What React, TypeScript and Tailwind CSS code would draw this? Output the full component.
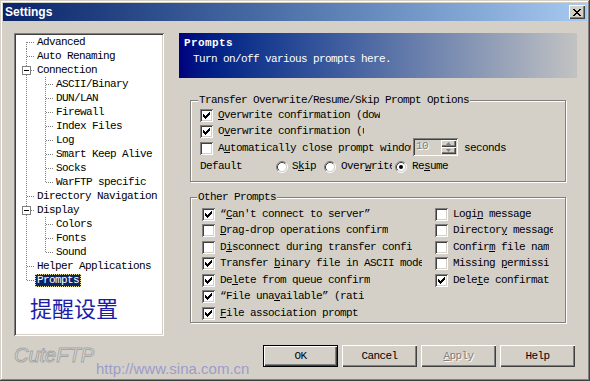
import React from "react";

const mono = "font-['Liberation_Mono','Courier_New',monospace] text-[11px] tracking-[-0.6px] leading-[13px]";
const raised = "shadow-[inset_1px_1px_#ffffff,inset_-1px_-1px_#404040,inset_-2px_-2px_#808080]";
const sunken = "shadow-[inset_1px_1px_#808080,inset_-1px_-1px_#ffffff,inset_2px_2px_#404040,inset_-2px_-2px_#d4d0c8]";
const etched = "border border-[#808080] shadow-[inset_1px_1px_#ffffff,1px_1px_#ffffff]";

const CHECK = ["......x", ".....xx", "x...xxx", "xx.xxx.", "xxxxx..", ".xxx...", "..x...."];
const CROSS = ["xx....xx", ".xx..xx.", "..xxxx..", "...xx...", "..xxxx..", ".xx..xx.", "xx....xx"];

function Pixels({ rows, color }: { rows: string[]; color: string }) {
  return (
    <svg width={rows[0].length} height={rows.length} shapeRendering="crispEdges" className="shrink-0">
      {rows.flatMap((r, y) =>
        r.split("").map((c, x) => (c === "x" ? <rect key={`${x}-${y}`} x={x} y={y} width="1" height="1" fill={color} /> : null))
      )}
    </svg>
  );
}

// label with one underlined access key
function Key({ text, u }: { text: string; u?: number }) {
  if (u === undefined) return <>{text}</>;
  return (
    <>
      {text.slice(0, u)}
      <span className="underline underline-offset-[1px]">{text[u]}</span>
      {text.slice(u + 1)}
    </>
  );
}

function Box({ on }: { on?: boolean }) {
  return (
    <div className={`w-[13px] h-[13px] shrink-0 bg-white ${sunken} flex items-center justify-center`}>
      {on && <Pixels rows={CHECK} color="#000" />}
    </div>
  );
}

function Radio({ on }: { on?: boolean }) {
  return (
    <svg width="12" height="12" viewBox="0 0 12 12" className="shrink-0">
      <circle cx="6" cy="6" r="4.5" fill="#fff" />
      <path d="M2.11 9.89 A5.5 5.5 0 0 1 9.89 2.11" fill="none" stroke="#808080" />
      <path d="M9.89 2.11 A5.5 5.5 0 0 1 2.11 9.89" fill="none" stroke="#ffffff" />
      <path d="M2.82 9.18 A4.5 4.5 0 0 1 9.18 2.82" fill="none" stroke="#404040" />
      <path d="M9.18 2.82 A4.5 4.5 0 0 1 2.82 9.18" fill="none" stroke="#d4d0c8" />
      {on && <circle cx="6" cy="6" r="2" fill="#000" />}
    </svg>
  );
}

type Node = { t: string; l: 1 | 2; box?: boolean; last?: boolean; sel?: boolean };

const tree: Node[] = [
  { t: "Advanced", l: 1 },
  { t: "Auto Renaming", l: 1 },
  { t: "Connection", l: 1, box: true },
  { t: "ASCII/Binary", l: 2 },
  { t: "DUN/LAN", l: 2 },
  { t: "Firewall", l: 2 },
  { t: "Index Files", l: 2 },
  { t: "Log", l: 2 },
  { t: "Smart Keep Alive", l: 2 },
  { t: "Socks", l: 2 },
  { t: "WarFTP specific", l: 2, last: true },
  { t: "Directory Navigation", l: 1 },
  { t: "Display", l: 1, box: true },
  { t: "Colors", l: 2 },
  { t: "Fonts", l: 2 },
  { t: "Sound", l: 2, last: true },
  { t: "Helper Applications", l: 1 },
  { t: "Prompts", l: 1, last: true, sel: true },
];

function Gutter({ v, h, box }: { v: "full" | "top" | "bottom"; h?: boolean; box?: boolean }) {
  return (
    <svg width="19" height="14" shapeRendering="crispEdges" className="shrink-0">
      <line x1="10.5" x2="10.5" y1={v === "bottom" ? 7 : 0} y2={v === "top" ? 8 : 14} stroke="#808080" strokeDasharray="1 1" />
      {h && <line x1={box ? 15 : 11} x2="19" y1="7.5" y2="7.5" stroke="#808080" strokeDasharray="1 1" />}
      {box && (
        <>
          <rect x="6.5" y="3.5" width="8" height="8" fill="#fff" stroke="#808080" />
          <line x1="8" x2="13" y1="7.5" y2="7.5" stroke="#000" />
        </>
      )}
    </svg>
  );
}

function TreeRow({ n, i }: { n: Node; i: number }) {
  const rootV = i === 0 ? "bottom" : n.l === 1 && n.last ? "top" : "full";
  return (
    <div className="h-[14px] flex items-center shrink-0">
      {n.l === 1 ? (
        <Gutter v={rootV} h box={n.box} />
      ) : (
        <>
          <Gutter v="full" />
          <Gutter v={n.last ? "top" : "full"} h />
        </>
      )}
      <span
        className={`px-[2px] h-[13px] whitespace-nowrap ${mono} ${
          n.sel ? "bg-[#0a246a] text-white outline outline-1 outline-dotted outline-[#e8e0a0] -outline-offset-1" : "text-black"
        }`}
      >
        {n.t}
      </span>
    </div>
  );
}

function Spinner() {
  return (
    <div className={`w-[45px] h-[18px] mb-[4px] ml-[2px] p-[2px] flex bg-[#d4d0c8] ${sunken}`}>
      <span className={`flex-1 pl-[1px] text-[#808080] [text-shadow:1px_1px_#ffffff] ${mono}`}>10</span>
      <div className="w-[15px] flex flex-col">
        <div className={`flex-1 flex items-center justify-center ${raised}`}>
          <svg width="5" height="3"><path d="M2.5 0 L5 3 L0 3 Z" fill="#808080" /></svg>
        </div>
        <div className={`flex-1 flex items-center justify-center ${raised}`}>
          <svg width="5" height="3"><path d="M0 0 L5 0 L2.5 3 Z" fill="#808080" /></svg>
        </div>
      </div>
    </div>
  );
}

type Opt = { on?: boolean; t: string; u?: number; w?: string };

const col1: Opt[] = [
  { on: true, t: "\u201cCan't connect to server\u201d", u: 1 },
  { t: "Drag-drop operations confirm", u: 0 },
  { t: "Disconnect during transfer confi", u: 1 },
  { on: true, t: "Transfer binary file in ASCII mode", u: 9, w: "w-[202px]" },
  { on: true, t: "Delete from queue confirm", u: 2 },
  { on: true, t: "\u201cFile unavailable\u201d (rati", u: 9 },
  { on: true, t: "File association prompt", u: 0 },
];

const col2: Opt[] = [
  { t: "Login message", u: 4 },
  { t: "Directory message", u: 8, w: "w-[100px]" },
  { t: "Confirm file nam", u: 6 },
  { t: "Missing permissi", u: 8 },
  { on: true, t: "Delete confirmat", u: 4 },
];

function CheckItem({ o }: { o: Opt }) {
  return (
    <div className="flex items-center">
      <Box on={o.on} />
      <span className={`ml-[5px] overflow-hidden whitespace-nowrap ${o.w ?? ""} ${mono}`}>
        <Key text={o.t} u={o.u} />
      </span>
    </div>
  );
}

function Btn({ label, u, def, off }: { label: string; u?: number; def?: boolean; off?: boolean }) {
  return (
    <div className={`w-[75px] h-[22px] flex ${def ? "border border-black" : ""}`}>
      <div
        className={`flex-1 flex items-center justify-center ${raised} ${mono} ${
          off ? "text-[#808080] [text-shadow:1px_1px_#ffffff]" : "text-black"
        }`}
      >
        <Key text={label} u={u} />
      </div>
    </div>
  );
}

export default function App() {
  return (
    <div className="relative w-[590px] h-[381px] overflow-hidden bg-[#d4d0c8] p-[3px] shadow-[inset_-1px_-1px_#404040,inset_1px_1px_#d4d0c8,inset_-2px_-2px_#808080,inset_2px_2px_#ffffff]">
      {/* title bar */}
      <div className="h-[18px] flex items-center justify-between pl-[2px] pr-[2px] bg-linear-to-r from-[#0a246a] to-[#a6caf0]">
        <span className="font-['Liberation_Sans',Arial,sans-serif] font-bold text-[12px] leading-[14px] text-white">Settings</span>
        <div className={`w-[16px] h-[14px] bg-[#d4d0c8] flex items-center justify-center ${raised}`}>
          <Pixels rows={CROSS} color="#000" />
        </div>
      </div>

      <div className="flex pt-[12px] pl-[11px]">
        {/* left: tree */}
        <div className="w-[150px] flex flex-col">
          <div className={`h-[303px] bg-white p-[2px] flex flex-col ${sunken}`}>
            {tree.map((n, i) => (
              <TreeRow key={n.t} n={n} i={i} />
            ))}
            <div className="mt-[9px] ml-[14px] text-[22px] leading-[22px] text-[#1c1ca8] font-['Noto_Sans_CJK_SC',sans-serif]">
              提醒设置
            </div>
          </div>
          <div className="mt-[9px] italic text-[20px] leading-[20px] text-[#ecebe6] [-webkit-text-stroke:1px_#a4a4a4] font-['Liberation_Sans',Arial,sans-serif]">
            CuteFTP
          </div>
        </div>

        {/* right: page */}
        <div className="ml-[15px] w-[398px] flex flex-col">
          <div className="h-[45px] pt-[4px] bg-linear-to-r from-[#00007e] to-[#c2c2c2] text-white">
            <div className={`pl-[5px] font-bold tracking-[0.4px] ${mono.replace("tracking-[-0.6px]", "")}`}>Prompts</div>
            <div className={`pl-[14px] mt-[3px] ${mono}`}>Turn on/off various prompts here.</div>
          </div>

          <div className={`relative mt-[22px] mx-[11px] pt-[6px] pb-[5px] pl-[9px] ${etched}`}>
            <span className={`absolute left-[7px] top-[-7px] px-[1px] bg-[#d4d0c8] ${mono}`}>
              Transfer Overwrite/Resume/Skip Prompt Options
            </span>
            <div className="h-[16px] flex items-center">
              <CheckItem o={{ on: true, t: "Overwrite confirmation (dow", u: 0 }} />
            </div>
            <div className="h-[17px] flex items-center">
              <CheckItem o={{ on: true, t: "Overwrite confirmation (upload)", u: 1, w: "w-[146px]" }} />
            </div>
            <div className="h-[17px] flex items-center">
              <CheckItem o={{ t: "Automatically close prompt window", u: 1, w: "w-[193px]" }} />
              <Spinner />
              <span className={`ml-[6px] ${mono}`}>seconds</span>
            </div>
            <div className={`h-[19px] flex items-center ${mono}`}>
              <span className="w-[76px]">Default</span>
              <div className="w-[48px] flex items-center">
                <Radio />
                <span className="ml-[4px]"><Key text="Skip" u={1} /></span>
              </div>
              <div className="w-[71px] flex items-center">
                <Radio />
                <span className="ml-[5px] w-[51px] overflow-hidden whitespace-nowrap"><Key text="Overwrite" u={4} /></span>
              </div>
              <div className="flex items-center">
                <Radio on />
                <span className="ml-[5px]"><Key text="Resume" u={2} /></span>
              </div>
            </div>
          </div>

          <div className={`relative mt-[15px] mx-[11px] pt-[8px] pb-[1px] pl-[11px] ${etched}`}>
            <span className={`absolute left-[6px] top-[-7px] px-[1px] bg-[#d4d0c8] ${mono}`}>Other Prompts</span>
            <div className="grid grid-flow-col grid-rows-[16px_17px_16px_17px_16px_17px_16px] grid-cols-[233px_1fr]">
              {col1.map((o) => (
                <CheckItem key={o.t} o={o} />
              ))}
              {col2.map((o) => (
                <CheckItem key={o.t} o={o} />
              ))}
            </div>
          </div>

          <div className="mt-[22px] pr-[2px] flex justify-end gap-[4px]">
            <Btn label="OK" def />
            <Btn label="Cancel" />
            <Btn label="Apply" u={0} off />
            <Btn label="Help" />
          </div>
        </div>
      </div>

      {/* watermark */}
      <div className="absolute left-[96px] top-[361px] text-[15px] leading-[15px] text-[#9c9cc8] font-['Liberation_Sans',Arial,sans-serif]">
        http://www.sina.com.cn
      </div>
    </div>
  );
}
